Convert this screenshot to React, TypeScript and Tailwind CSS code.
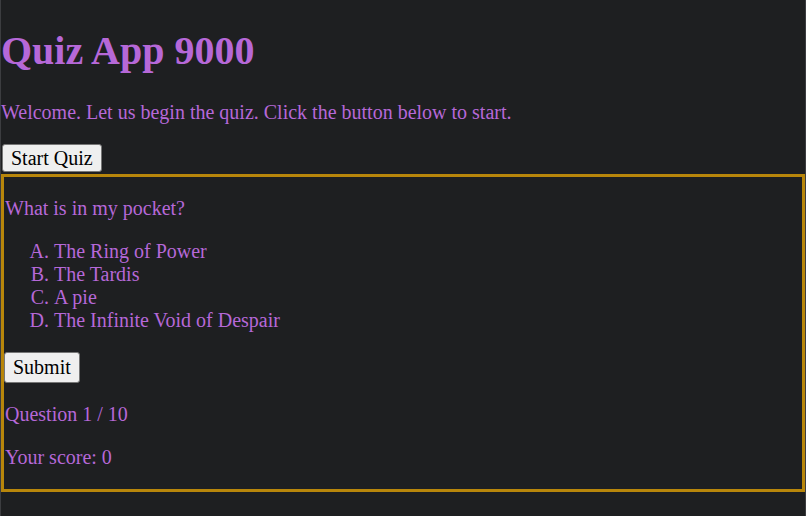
export default function App() {
  const choices = [
    'The Ring of Power',
    'The Tardis',
    'A pie',
    'The Infinite Void of Despair',
  ];

  return (
    <div className="min-h-[516px] bg-[#1e1f21] border-x border-[#3c3d40] py-px text-[20px] text-[#b668d8] font-['Times_New_Roman','Liberation_Serif',serif] leading-[1.149]">
      <h1 className="text-[40px] font-bold my-[0.67em] leading-[1.149]">Quiz App 9000</h1>
      <p className="my-[20px]">Welcome. Let us begin the quiz. Click the button below to start.</p>
      <button className="block ml-px bg-[#efefef] text-black border border-[#767676] rounded-[3px] px-[8px] py-[2px] leading-[1.149]">
        Start Quiz
      </button>
      <div className="mt-[2px] border-[3px] border-[#b8860b]">
        <p className="my-[20px] pl-px">What is in my pocket?</p>
        <ol className="list-[upper-alpha] pl-[50px] my-[20px]">
          {choices.map((c) => (
            <li key={c}>{c}</li>
          ))}
        </ol>
        <button className="block bg-[#efefef] text-black border border-[#767676] rounded-[3px] px-[8px] py-[3px] leading-[1.149]">
          Submit
        </button>
        <p className="my-[20px] pl-px">Question 1 / 10</p>
        <p className="my-[20px] pl-px">Your score: 0</p>
      </div>
    </div>
  );
}
